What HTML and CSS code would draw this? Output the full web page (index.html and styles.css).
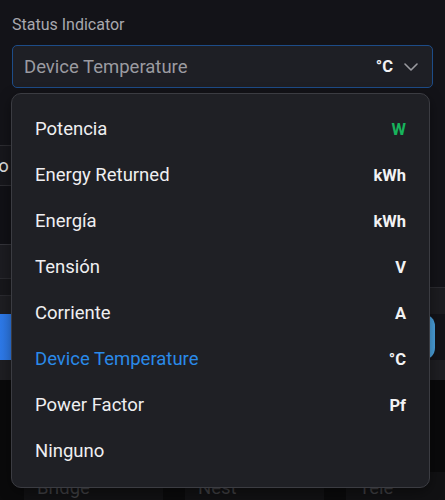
FILE: index.html
```html
<!DOCTYPE html>
<html lang="en">
<head>
    <meta charset="UTF-8">
    <title>Status Indicator</title>
    <link rel="stylesheet" href="styles.css">
</head>
<body>
    <div class="field">
        <label class="field-label" for="status-select">Status Indicator</label>
        <div class="select" id="status-select">
            <span class="select-value">Device Temperature</span>
            <span class="unit">°C</span>
            <svg class="chevron" width="14" height="8" viewBox="0 0 14 8">
                <path d="M1 1 L7 7 L13 1" fill="none" stroke="#9a9aa0" stroke-width="1.6" stroke-linecap="round" stroke-linejoin="round"/>
            </svg>
        </div>
        <ul class="menu">
            <li class="option"><span>Potencia</span><span class="unit green">W</span></li>
            <li class="option"><span>Energy Returned</span><span class="unit">kWh</span></li>
            <li class="option"><span>Energía</span><span class="unit">kWh</span></li>
            <li class="option"><span>Tensión</span><span class="unit">V</span></li>
            <li class="option"><span>Corriente</span><span class="unit">A</span></li>
            <li class="option selected"><span>Device Temperature</span><span class="unit">°C</span></li>
            <li class="option"><span>Power Factor</span><span class="unit">Pf</span></li>
            <li class="option"><span>Ninguno</span></li>
        </ul>
    </div>

    <!-- content behind the open menu -->
    <div class="behind">
        <div class="cols">
            <div class="col-left">
                <div class="row row-gap"></div>
                <div class="row row-a"><span class="row-text">Modo</span></div>
                <div class="row row-b"></div>
                <div class="row row-c"></div>
                <div class="row row-d"></div>
                <div class="row row-e"></div>
            </div>
            <div class="col-right">
                <div class="row row-gap-r"></div>
                <div class="row row-f"></div>
            </div>
        </div>
        <div class="save-btn"></div>
        <div class="band"></div>
        <div class="tabs">
            <div class="tab">Bridge</div>
            <div class="tab">Nest</div>
            <div class="tab">Tele</div>
        </div>
    </div>
</body>
</html>
```

FILE: styles.css
```css
body {
    margin: 0;
    background: #131318;
    font-family: Roboto, "Noto Sans", sans-serif;
    color: #e8e8ea;
    overflow: hidden;
    height: 500px;
}

.field {
    position: relative;
    padding: 14px 12px 0 12px;
}

.field-label {
    display: block;
    font-size: 16px;
    line-height: 22px;
    color: #a8a8ae;
}

.select {
    margin-top: 9px;
    height: 43px;
    box-sizing: border-box;
    border: 1px solid #1d4c88;
    border-radius: 5px;
    background: #1e1f25;
    display: flex;
    align-items: center;
    padding: 0 14px 0 11px;
}

.select-value {
    flex: 1;
    font-size: 18.5px;
    color: #9b9ba1;
}

.select .unit {
    margin-right: 11px;
}

.chevron {
    display: block;
}

.unit {
    font-weight: 700;
    font-size: 16.5px;
    color: #f2f2f4;
}

.unit.green {
    color: #17b45c;
}

.menu {
    position: absolute;
    top: 93px;
    left: 11px;
    width: 419px;
    box-sizing: border-box;
    margin: 0;
    padding: 12px 0 13px 0;
    list-style: none;
    background: #1f2025;
    border: 1px solid #3b3c42;
    border-radius: 10px;
    box-shadow: 0 4px 14px rgba(0, 0, 0, 0.4);
    z-index: 2;
}

.option {
    height: 46px;
    display: flex;
    align-items: center;
    justify-content: space-between;
    padding: 0 23px 0 23px;
    font-size: 18.5px;
    color: #efeff1;
}

.option.selected {
    color: #2a8ae9;
}

.option.selected .unit {
    color: #f2f2f4;
}

.behind {
    overflow: hidden;
}

.cols {
    display: flex;
}

.col-left {
    width: 222px;
}

.col-right {
    flex: 1;
}

.row {
    box-sizing: border-box;
}

.row-gap {
    height: 57px;
}

.row-a {
    height: 41px;
    background: #17171c;
    border-top: 1px solid #2c2c31;
    border-bottom: 1px solid #2c2c31;
    display: flex;
    align-items: center;
    overflow: hidden;
}

.row-text {
    margin-left: -39px;
    font-size: 18.5px;
    color: #e0e0e2;
}

.row-b {
    height: 58px;
    background: #111116;
}

.row-c {
    height: 34px;
    background: #1c1c21;
    border-top: 1px solid #34343a;
}

.row-d {
    height: 17px;
    background: #17171b;
    border-top: 1px solid #2a2a2f;
}

.row-e {
    height: 19px;
    background: #1e1e22;
    border-top: 1px solid #2a2a2f;
}

.row-gap-r {
    height: 199px;
}

.row-f {
    height: 27px;
    background: #1c1c20;
    border-top: 1px solid #2a2a2f;
}

.save-btn {
    margin-left: -20px;
    width: 455px;
    height: 46px;
    border-radius: 12px;
    background: linear-gradient(90deg, #2c78ea, #4ba2de);
}

.band {
    height: 20px;
    background: #1e1e22;
}

.tabs {
    background: #0a0a0b;
    height: 120px;
    box-sizing: border-box;
    display: flex;
    gap: 22px;
    padding: 92px 0 0 24px;
}

.tab {
    flex-shrink: 0;
    width: 139px;
    height: 28px;
    box-sizing: border-box;
    padding: 5px 13px 0 13px;
    background: #111113;
    font-size: 18.5px;
    color: #3d3d40;
}
```
